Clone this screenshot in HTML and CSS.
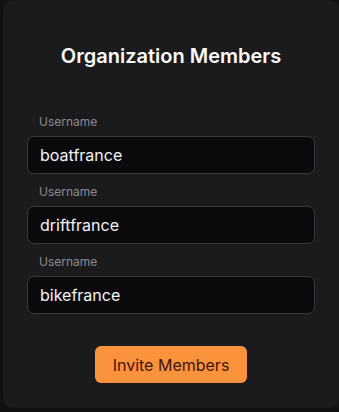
FILE: index.html
```html
<!DOCTYPE html>
<html lang="en">
<head>
  <meta charset="UTF-8">
  <meta name="viewport" content="width=device-width, initial-scale=1">
  <title>Organization Members</title>
  <link rel="stylesheet" href="styles.css">
</head>
<body>

<div class="card">
  <h2 class="card-title">Organization Members</h2>

  <form class="members-form">
    <div class="field">
      <label for="user1">Username</label>
      <input id="user1" type="text" value="boatfrance">
    </div>
    <div class="field">
      <label for="user2">Username</label>
      <input id="user2" type="text" value="driftfrance">
    </div>
    <div class="field">
      <label for="user3">Username</label>
      <input id="user3" type="text" value="bikefrance">
    </div>

    <div class="actions">
      <button type="button" class="invite-button">Invite Members</button>
    </div>
  </form>
</div>

</body>
</html>
```

FILE: styles.css
```css
:root {
  --page-bg: #111113;
  --card-bg: #1b1b1d;
  --input-bg: #0a0a0c;
  --border: #3a3a3e;
  --muted: #8b8b90;
  --accent: #fb923c;
}

body {
  margin: 0;
  background-color: var(--page-bg);
  font-family: 'Inter', 'Noto Sans', sans-serif;
  color: #f4f4f5;
}

/* Card */
.card {
  margin-left: 3px;
  height: 408px;
  box-sizing: border-box;
  padding: 42px 24px 25px;
  background-color: var(--card-bg);
  border-radius: 10px;
}

.card-title {
  margin: 0 0 44px;
  text-align: center;
  font-size: 20px;
  line-height: 28px;
  font-weight: 600;
  color: #fafafa;
}

.field {
  display: flex;
  flex-direction: column;
  margin-bottom: 10px;
}

.field label {
  font-size: 12px;
  line-height: 16px;
  color: var(--muted);
  padding-left: 12px;
  margin-bottom: 6px;
}

.field input {
  height: 38px;
  box-sizing: border-box;
  padding: 0 12px 1px;
  background-color: var(--input-bg);
  border: 1px solid var(--border);
  border-radius: 7px;
  color: #f4f4f5;
  font-family: inherit;
  font-size: 16px;
  outline: none;
}

.actions {
  display: flex;
  justify-content: center;
  margin-top: 32px;
}

.invite-button {
  height: 37px;
  padding: 0 18px;
  background-color: var(--accent);
  color: #431407;
  border: none;
  border-radius: 6px;
  font-family: 'Inter', sans-serif;
  font-size: 16px;
}
```
